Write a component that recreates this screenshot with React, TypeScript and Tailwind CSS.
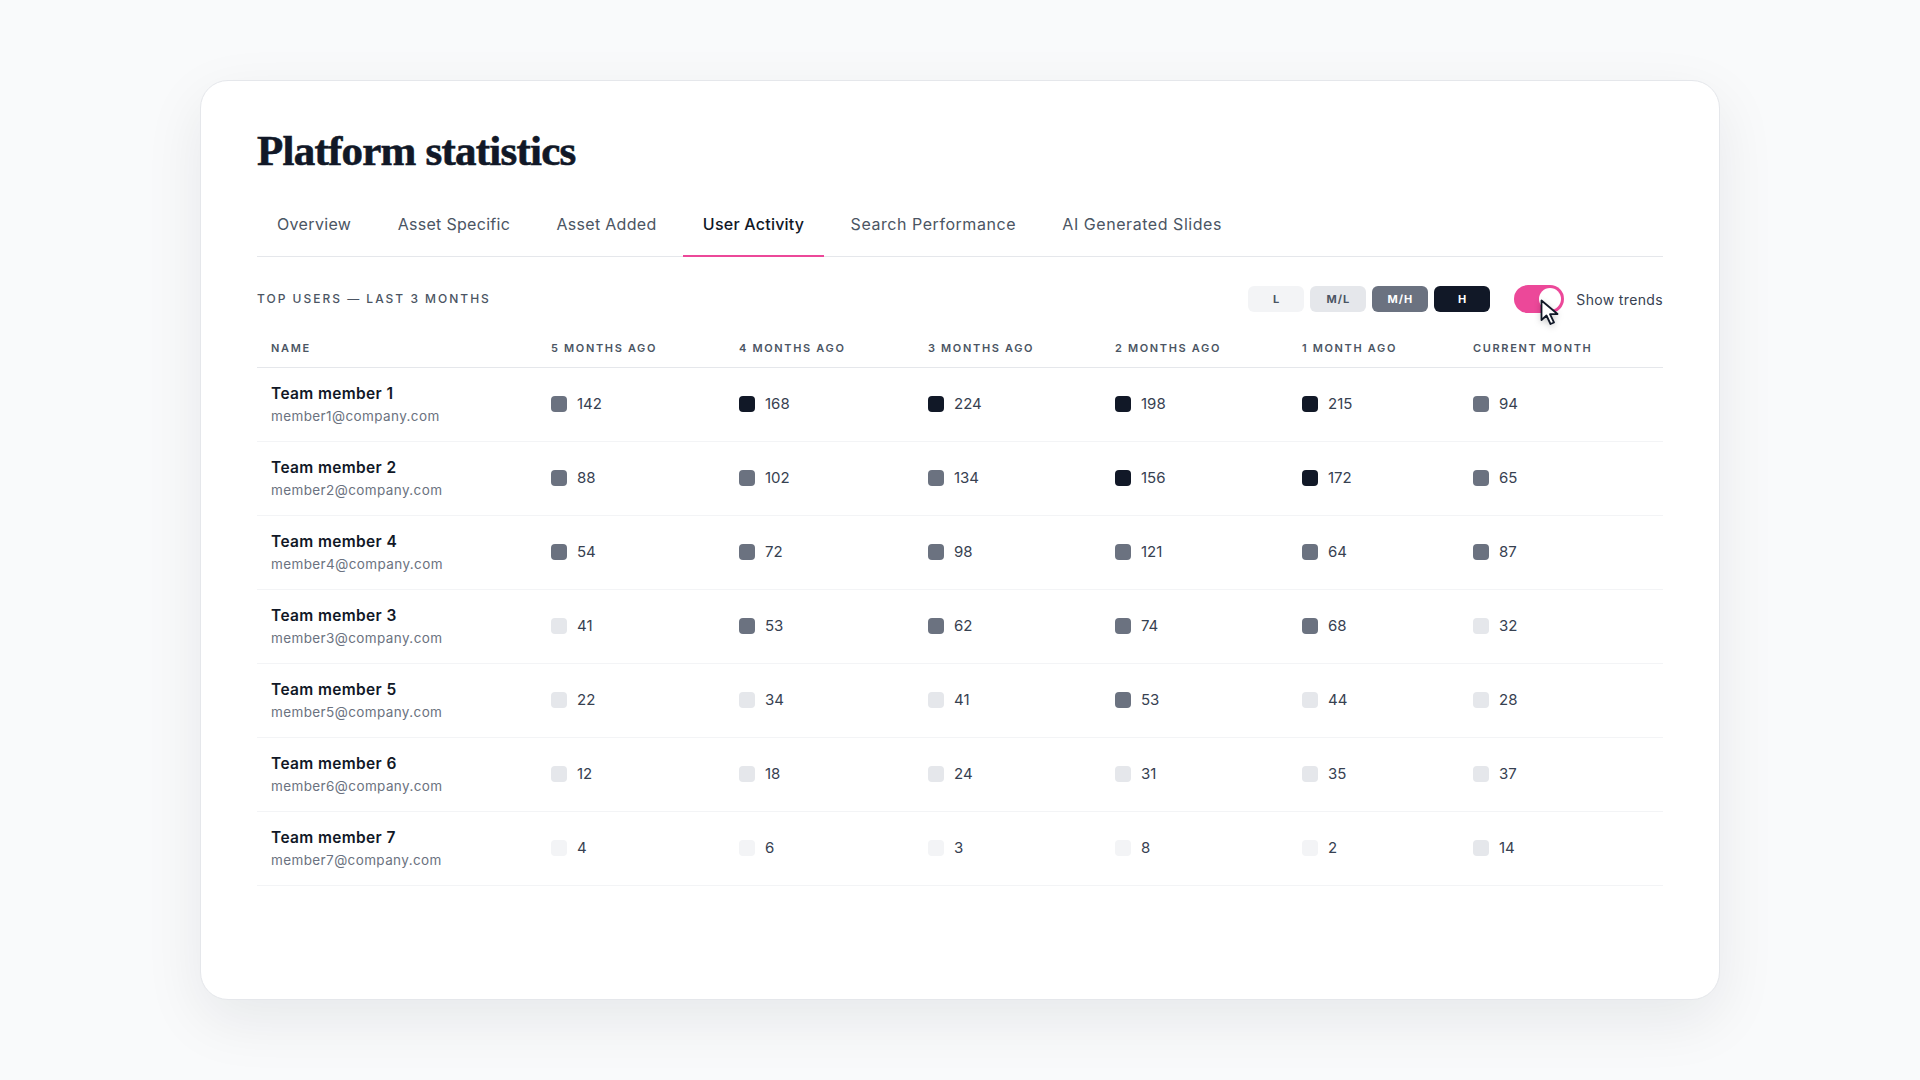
import { useState } from 'react'

const tabs = [
  { label: 'Overview', cls: 'tracking-[0.35px] text-[#4b5563]' },
  { label: 'Asset Specific', cls: 'tracking-[0.3px] text-[#4b5563]' },
  { label: 'Asset Added', cls: 'tracking-[0.3px] text-[#4b5563]' },
  { label: 'User Activity', cls: 'tracking-[0.23px] font-medium text-[#111827] -mb-px h-[65px] border-b-2 border-[#ec4899]' },
  { label: 'Search Performance', cls: 'tracking-[0.55px] text-[#4b5563]' },
  { label: 'AI Generated Slides', cls: 'tracking-[0.55px] text-[#4b5563]' },
]

const columns = [
  { label: '5 months ago', width: 'w-[188px]' },
  { label: '4 months ago', width: 'w-[189px]' },
  { label: '3 months ago', width: 'w-[187px]' },
  { label: '2 months ago', width: 'w-[187px]' },
  { label: '1 month ago', width: 'w-[171px]' },
  { label: 'Current month', width: 'w-[204px]' },
]

const levels = {
  l: 'bg-[#f3f4f6]',
  ml: 'bg-[#e5e7eb]',
  mh: 'bg-[#6b7280]',
  h: 'bg-[#111827]',
}

type Level = keyof typeof levels

const members: { id: number; cells: [number, Level][] }[] = [
  { id: 1, cells: [[142, 'mh'], [168, 'h'], [224, 'h'], [198, 'h'], [215, 'h'], [94, 'mh']] },
  { id: 2, cells: [[88, 'mh'], [102, 'mh'], [134, 'mh'], [156, 'h'], [172, 'h'], [65, 'mh']] },
  { id: 4, cells: [[54, 'mh'], [72, 'mh'], [98, 'mh'], [121, 'mh'], [64, 'mh'], [87, 'mh']] },
  { id: 3, cells: [[41, 'ml'], [53, 'mh'], [62, 'mh'], [74, 'mh'], [68, 'mh'], [32, 'ml']] },
  { id: 5, cells: [[22, 'ml'], [34, 'ml'], [41, 'ml'], [53, 'mh'], [44, 'ml'], [28, 'ml']] },
  { id: 6, cells: [[12, 'ml'], [18, 'ml'], [24, 'ml'], [31, 'ml'], [35, 'ml'], [37, 'ml']] },
  { id: 7, cells: [[4, 'l'], [6, 'l'], [3, 'l'], [8, 'l'], [2, 'l'], [14, 'ml']] },
]

function Legend() {
  return (
    <div className="flex gap-1.5">
      <span className="flex h-[26px] w-14 items-center justify-center rounded-md bg-[#f3f4f6] text-[11px] leading-none font-bold tracking-[0.5px] text-[#4b5563]">L</span>
      <span className="flex h-[26px] w-14 items-center justify-center rounded-md bg-[#e5e7eb] text-[11px] leading-none font-bold tracking-[1px] text-[#4b5563]">M/L</span>
      <span className="flex h-[26px] w-14 items-center justify-center rounded-md bg-[#6b7280] text-[11px] leading-none font-bold tracking-[1px] text-white">M/H</span>
      <span className="flex h-[26px] w-14 items-center justify-center rounded-md bg-[#111827] text-[11px] leading-none font-bold tracking-[0.5px] text-white">H</span>
    </div>
  )
}

export default function App() {
  const [trends, setTrends] = useState(true)

  return (
    <div className="flex min-h-screen items-center justify-center bg-[#f9fafb] font-['Inter',sans-serif]">
      <div className="h-[920px] w-[1520px] rounded-[28px] border border-[#e5e7eb] bg-white px-[56px] pt-[40px] shadow-[0_20px_60px_rgba(17,24,39,0.08)]">
        <h1 className="font-['Liberation_Serif',serif] text-[43px] leading-[60px] font-bold tracking-[-0.77px] text-[#111827] [-webkit-text-stroke:0.6px_#111827]">
          Platform statistics
        </h1>

        <div className="mt-[11px] flex gap-[6.3px] border-b border-[#e5e7eb]">
          {tabs.map((tab) => (
            <button key={tab.label} className={`h-[64px] px-5 text-[16px] ${tab.cls}`}>
              {tab.label}
            </button>
          ))}
        </div>

        <div className="relative mt-[27px] flex h-[30px] items-center justify-between">
          <span className="text-[12px] font-medium tracking-[2px] text-[#4b5563] uppercase">Top users — last 3 months</span>
          <div className="flex items-center">
            <Legend />
            <button
              onClick={() => setTrends(!trends)}
              className={
                trends
                  ? 'ml-6 flex h-7 w-[50px] items-center justify-end rounded-full bg-[#ec4899] p-[3px]'
                  : 'ml-6 flex h-7 w-[50px] items-center justify-start rounded-full bg-[#d1d5db] p-[3px]'
              }
            >
              <span className="size-[22px] rounded-full bg-white" />
            </button>
            <span className="ml-3 text-[14px] tracking-[0.35px] text-[#374151]">Show trends</span>
          </div>
          <svg
            className="absolute top-[15px] left-[1283px] drop-shadow-[0_2px_3px_rgba(0,0,0,0.2)]"
            width="20"
            height="27"
            viewBox="0 0 20 27"
          >
            <path
              d="M1.5 1.5 L1.5 21 L6.5 16.5 L10.5 25 L14 23.5 L10 15.2 L17.5 15 Z"
              fill="#ffffff"
              stroke="#111827"
              strokeWidth="1.8"
              strokeLinejoin="round"
            />
          </svg>
        </div>

        <table className="mt-[16px] w-full table-fixed border-collapse">
          <thead>
            <tr className="h-[37px] border-b border-[#e5e7eb]">
              <th className="w-[280px] pl-[14px] text-left text-[11px] font-semibold tracking-[1.65px] text-[#4b5563] uppercase">Name</th>
              {columns.map((col) => (
                <th key={col.label} className={`${col.width} pl-[14px] text-left text-[11px] font-semibold tracking-[1.65px] text-[#4b5563] uppercase`}>
                  {col.label}
                </th>
              ))}
            </tr>
          </thead>
          <tbody>
            {members.map((m) => (
              <tr key={m.id} className="h-[74px] border-b border-[#f3f4f6]">
                <td className="pl-[14px]">
                  <div className="text-[15.5px] leading-[24px] font-semibold tracking-[0.36px] text-[#111827]">Team member {m.id}</div>
                  <div className="text-[13.5px] leading-[20px] tracking-[0.39px] text-[#6b7280]">member{m.id}@company.com</div>
                </td>
                {m.cells.map(([value, level], i) => (
                  <td key={i} className="pl-[14px]">
                    <div className="flex items-center gap-[10px] text-[15px] text-[#374151]">
                      <span className={`size-4 rounded ${levels[level]}`} />
                      <span>{value}</span>
                    </div>
                  </td>
                ))}
              </tr>
            ))}
          </tbody>
        </table>
      </div>
    </div>
  )
}
